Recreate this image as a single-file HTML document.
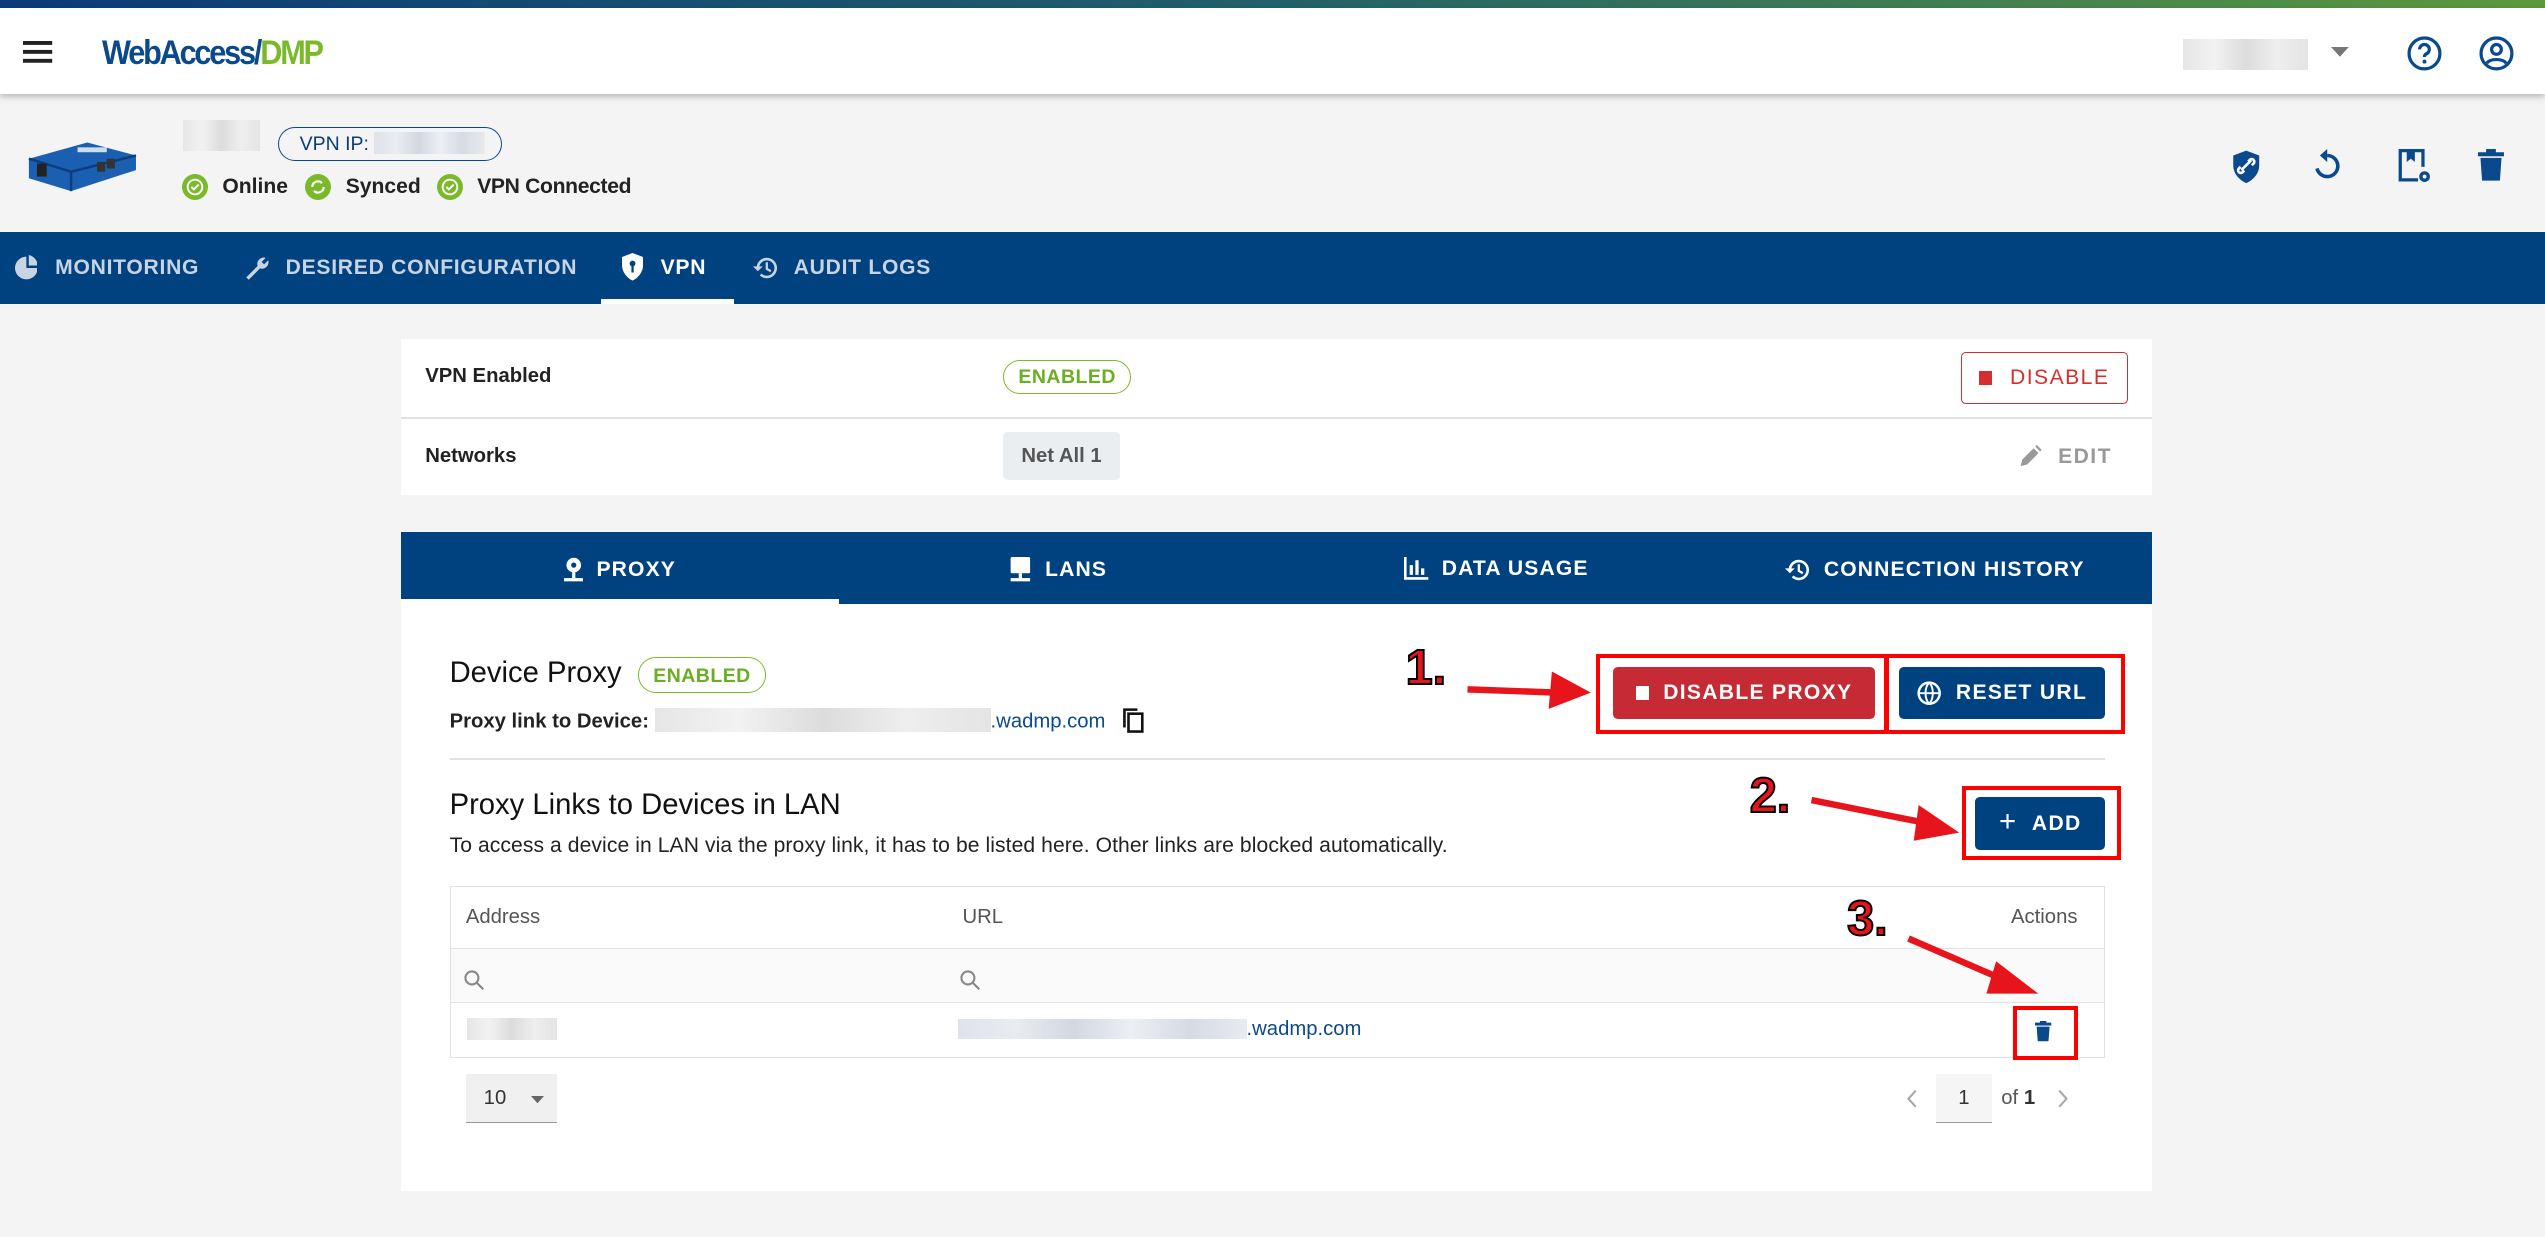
<!DOCTYPE html>
<html><head><meta charset="utf-8">
<style>
*{box-sizing:border-box;margin:0;padding:0}
html,body{width:2545px;height:1237px;overflow:hidden;background:#f4f4f4;font-family:"Liberation Sans",sans-serif}
#w{position:absolute;left:0;top:0;width:1568px;height:762px;zoom:1.6231;background:#f4f4f4}
.a{position:absolute}
.top{left:0;top:0;width:1568px;height:5px;background:linear-gradient(90deg,#0b3b78,#22606a 50%,#5b9a3c)}
.hdr{left:0;top:5px;width:1568px;height:53px;background:#fff;box-shadow:0 2px 4px rgba(0,0,0,.25)}
.blur{background:linear-gradient(90deg,#e6e6e6,#f2f2f2,#dcdcdc,#eee,#e4e4e4)}
.blurb{background:linear-gradient(90deg,#dfe3ea,#e9ecf0,#d3d8e0,#eceff3,#d6dbe3,#e8ebef)}
.b13{font-size:13px;font-weight:bold;color:#222}
.nav{left:0;top:143px;width:1568px;height:44px;background:#004280}
.nt{top:158px;font-size:13px;font-weight:bold;color:#c8d4e3;letter-spacing:.45px}
.card{background:#fff}
.chip{border:1px solid #7ab929;color:#6aae22;border-radius:11px;font-size:12px;font-weight:bold;text-align:center;letter-spacing:.3px}
.btn{border-radius:3px;color:#fff;font-size:13px;font-weight:bold;letter-spacing:.8px;display:flex;align-items:center;justify-content:center;gap:9px}
.rb{border:3px solid #f00}
.num{font-size:30px;font-weight:bold;color:#e8141c;-webkit-text-stroke:1.2px #000}
.tt{top:343px;font-size:13px;font-weight:bold;color:#fff;letter-spacing:.7px;display:flex;align-items:center;gap:8px;justify-content:center;width:270px}
</style></head><body><div id="w">
<div class="a top"></div>
<div class="a hdr"></div>
<svg class="a" style="left:14px;top:25px" width="19" height="14"><rect y="0" width="18" height="2.4" fill="#222"/><rect y="5.5" width="18" height="2.4" fill="#222"/><rect y="11" width="18" height="2.4" fill="#222"/></svg>
<div class="a" style="left:63px;top:21px;font-size:21px;font-weight:bold;color:#0a4a8c;letter-spacing:-1.5px;transform:scaleX(.9);transform-origin:left">WebAccess/<span style="color:#7ab929">DMP</span></div>
<div class="a blur" style="left:1345px;top:24px;width:77px;height:19px"></div>
<svg class="a" style="left:1436px;top:29px" width="12" height="7"><path d="M0 0h11L5.5 6z" fill="#777"/></svg>
<svg class="a" style="left:1482px;top:21px" width="24" height="24" viewBox="0 0 24 24"><circle cx="12" cy="12" r="9.5" fill="none" stroke="#0a4a8c" stroke-width="2"/><path d="M9 9.5a3 3 0 1 1 4 2.8c-.8.4-1 .9-1 1.9" fill="none" stroke="#0a4a8c" stroke-width="2"/><circle cx="12" cy="17" r="1.2" fill="#0a4a8c"/></svg>
<svg class="a" style="left:1526px;top:21px" width="24" height="24" viewBox="0 0 24 24"><circle cx="12" cy="12" r="9.5" fill="none" stroke="#0a4a8c" stroke-width="2"/><circle cx="12" cy="9.5" r="3" fill="none" stroke="#0a4a8c" stroke-width="2"/><path d="M6 18c2-3 10-3 12 0" fill="none" stroke="#0a4a8c" stroke-width="2"/></svg>

<svg class="a" style="left:15px;top:84px" width="70" height="36" viewBox="0 0 70 36"><path d="M3 14l36-10 30 8v9l-40 13-26-8z" fill="#1a5fb0"/><path d="M3 14l26 8 40-10" fill="none" stroke="#0d3d80" stroke-width="1.5"/><path d="M29 22v12" stroke="#0d3d80" stroke-width="1.5"/><rect x="33" y="7" width="18" height="3" fill="#cfdcee"/><rect x="45" y="16" width="5" height="6" fill="#333"/><rect x="51" y="14" width="5" height="6" fill="#333"/><rect x="8" y="17" width="6" height="8" fill="#222"/></svg>
<div class="a blur" style="left:113px;top:74px;width:47px;height:19px"></div>
<div class="a" style="left:171px;top:78px;width:138px;height:21px;border:1px solid #0a4a8c;border-radius:11px;font-size:12px;color:#0a3d7a;padding:3px 0 0 13px">VPN IP: <span class="blurb" style="display:inline-block;width:68px;height:13px;vertical-align:-2px"></span></div>
<svg class="a" style="left:112px;top:107px" width="16" height="16"><circle cx="8" cy="8" r="8" fill="#7ab929"/><circle cx="8" cy="8" r="4.5" fill="none" stroke="#fff" stroke-width="1.2"/><path d="M5.8 8l1.5 1.5 3-3" fill="none" stroke="#fff" stroke-width="1.2"/></svg>
<div class="a b13" style="left:137px;top:108px">Online</div>
<svg class="a" style="left:188px;top:107px" width="16" height="16"><circle cx="8" cy="8" r="8" fill="#7ab929"/><path d="M4.5 8a3.5 3.5 0 0 1 6-2.4M11.5 8a3.5 3.5 0 0 1-6 2.4" fill="none" stroke="#fff" stroke-width="1.3"/></svg>
<div class="a b13" style="left:213px;top:108px">Synced</div>
<svg class="a" style="left:269px;top:107px" width="16" height="16"><circle cx="8" cy="8" r="8" fill="#7ab929"/><circle cx="8" cy="8" r="4.5" fill="none" stroke="#fff" stroke-width="1.2"/><path d="M5.8 8l1.5 1.5 3-3" fill="none" stroke="#fff" stroke-width="1.2"/></svg>
<div class="a b13" style="left:294px;top:108px;letter-spacing:-.2px">VPN Connected</div>

<svg class="a" style="left:1374px;top:92px" width="20" height="22" viewBox="0 0 20 22"><path d="M10 1l8 3v6c0 5-3.5 9-8 11C5.5 19 2 15 2 10V4z" fill="#0a4a8c"/><path d="M7 13l6-6M6.5 11l-1 1a1.6 1.6 0 0 0 2.3 2.3l1-1M13.5 10l1-1a1.6 1.6 0 0 0-2.3-2.3l-1 1" stroke="#fff" stroke-width="1.6" fill="none"/></svg>
<svg class="a" style="left:1424px;top:92px" width="20" height="20" viewBox="0 0 20 20"><path d="M10 4a6.5 6.5 0 1 1-6.3 8" fill="none" stroke="#0a4a8c" stroke-width="2.2" stroke-dasharray="30 2 4"/><path d="M10 0v8L5.5 4z" fill="#0a4a8c"/></svg>
<svg class="a" style="left:1477px;top:92px" width="22" height="22" viewBox="0 0 22 22"><path d="M13 19H2V1h14v10" fill="none" stroke="#0a4a8c" stroke-width="2"/><path d="M6 1v7l2.5-2L11 8V1z" fill="#0a4a8c"/><circle cx="17" cy="17" r="3.3" fill="#0a4a8c"/><circle cx="17" cy="17" r="1.2" fill="#f4f4f4"/></svg>
<svg class="a" style="left:1527px;top:92px" width="16" height="20" viewBox="0 0 16 20"><rect x="0" y="2" width="16" height="2.5" fill="#0a4a8c"/><rect x="5" y="0" width="6" height="2.5" fill="#0a4a8c"/><path d="M1.5 5.5h13l-1 14h-11z" fill="#0a4a8c"/></svg>

<div class="a nav"></div>
<svg class="a" style="left:9px;top:157px" width="14" height="16"><path d="M7 1A7 7 0 1 0 14 8H7z" fill="#c8d4e3"/><path d="M8.5 0v6.5H14A7 7 0 0 0 8.5 0z" fill="#c8d4e3"/></svg>
<div class="a nt" style="left:34px">MONITORING</div>
<svg class="a" style="left:150px;top:156px" width="17" height="17"><path d="M2 15l7-7a4 4 0 0 1 5-5l-2.5 2.5 1.5 1.5 2.5-2.5a4 4 0 0 1-5 5l-7 7z" fill="#c8d4e3"/></svg>
<div class="a nt" style="left:176px">DESIRED CONFIGURATION</div>
<svg class="a" style="left:383px;top:156px" width="13" height="17"><path d="M6.5 0L13 2.5v5c0 4-3 8-6.5 9.5C3 15.5 0 11.5 0 7.5v-5z" fill="#fff"/><circle cx="6.5" cy="6.5" r="1.8" fill="#004280"/><rect x="5.8" y="7" width="1.4" height="5" fill="#004280"/></svg>
<div class="a nt" style="left:407px;color:#fff">VPN</div>
<div class="a" style="left:370px;top:184px;width:82px;height:3px;background:#fff"></div>
<svg class="a" style="left:464px;top:157px" width="16" height="16"><path d="M3 8a5.5 5.5 0 1 1 1.7 4" fill="none" stroke="#c8d4e3" stroke-width="1.6"/><path d="M0 7h6L3 10z" fill="#c8d4e3"/><path d="M8.5 4.5V8.5l2.5 1.5" fill="none" stroke="#c8d4e3" stroke-width="1.4"/></svg>
<div class="a nt" style="left:489px">AUDIT LOGS</div>

<div class="a card" style="left:247px;top:209px;width:1079px;height:96px"></div>
<div class="a" style="left:247px;top:257px;width:1079px;height:1px;background:#e2e2e2"></div>
<div class="a b13" style="left:262px;top:225px;font-size:12.5px">VPN Enabled</div>
<div class="a chip" style="left:618px;top:222px;width:79px;height:21px;padding-top:3px">ENABLED</div>
<div class="a" style="left:1208px;top:217px;width:103px;height:32px;border:1px solid #d32f2f;border-radius:3px;color:#d32f2f;font-size:13px;letter-spacing:.9px;display:flex;align-items:center;justify-content:center;gap:11px"><span style="width:8px;height:9px;background:#d32f2f"></span>DISABLE</div>
<div class="a b13" style="left:262px;top:274px;font-size:12.5px">Networks</div>
<div class="a" style="left:618px;top:266px;width:72px;height:30px;background:#ebeef1;border-radius:3px;font-size:12.5px;color:#555;font-weight:bold;text-align:center;padding-top:8px">Net All 1</div>
<svg class="a" style="left:1244px;top:274px" width="14" height="14"><path d="M1 13l1-4 7-7 3 3-7 7zM10 1l1-1 3 3-1 1z" fill="#999"/></svg>
<div class="a" style="left:1268px;top:274px;font-size:13px;color:#999;font-weight:bold;letter-spacing:.9px">EDIT</div>

<div class="a" style="left:247px;top:328px;width:1079px;height:44px;background:#004280"></div>
<div class="a" style="left:247px;top:369px;width:270px;height:3px;background:#fff"></div>
<div class="a tt" style="left:247px"><svg width="12" height="16"><circle cx="6" cy="5" r="4.5" fill="#fff"/><circle cx="6" cy="5" r="1.6" fill="#004280"/><rect x="5" y="9" width="2" height="4" fill="#fff"/><rect x="0" y="13" width="12" height="2" fill="#fff"/></svg>PROXY</div>
<div class="a tt" style="left:517px"><svg width="14" height="16"><rect x="1" y="0" width="12" height="10" rx="1" fill="#fff"/><rect x="6" y="10" width="2" height="3" fill="#fff"/><rect x="1" y="13" width="12" height="2" fill="#fff"/></svg>LANS</div>
<div class="a tt" style="left:787px"><svg width="15" height="14"><path d="M0 0h1.6v12.4H15V14H0z" fill="#fff"/><rect x="3.5" y="5" width="2" height="6" fill="#fff"/><rect x="7" y="2" width="2" height="9" fill="#fff"/><rect x="10.5" y="7" width="2" height="4" fill="#fff"/></svg>DATA USAGE</div>
<div class="a tt" style="left:1057px"><svg width="16" height="16"><path d="M3 8a5.5 5.5 0 1 1 1.7 4" fill="none" stroke="#fff" stroke-width="1.6"/><path d="M0 7h6L3 10z" fill="#fff"/><path d="M8.5 4.5V8.5l2.5 1.5" fill="none" stroke="#fff" stroke-width="1.4"/></svg>CONNECTION HISTORY</div>

<div class="a card" style="left:247px;top:372px;width:1079px;height:362px"></div>
<div class="a" style="left:277px;top:405px;font-size:18px;color:#111">Device Proxy</div>
<div class="a chip" style="left:393px;top:405px;width:79px;height:22px;padding-top:4px">ENABLED</div>
<div class="a b13" style="left:277px;top:436px;font-size:12.5px">Proxy link to Device: <span class="blur" style="display:inline-block;width:207px;height:15px;vertical-align:-3px"></span><span style="color:#0a4a8c;font-weight:normal">.wadmp.com</span></div>
<svg class="a" style="left:691px;top:436px" width="14" height="16"><rect x="4" y="3.5" width="8.5" height="11" fill="none" stroke="#111" stroke-width="1.6"/><path d="M1.5 12V1h8" fill="none" stroke="#111" stroke-width="1.6"/></svg>
<div class="a btn" style="left:994px;top:411px;width:161px;height:32px;background:#c62a35"><span style="width:8px;height:9px;background:#fff"></span>DISABLE PROXY</div>
<div class="a btn" style="left:1170px;top:411px;width:127px;height:32px;background:#004280"><svg width="15" height="15"><circle cx="7.5" cy="7.5" r="6.5" fill="none" stroke="#fff" stroke-width="1.5"/><path d="M1 7.5h13M7.5 1c-3 3-3 10 0 13M7.5 1c3 3 3 10 0 13" fill="none" stroke="#fff" stroke-width="1.2"/></svg>RESET URL</div>
<div class="a rb" style="left:983px;top:403px;width:181px;height:49px"></div>
<div class="a rb" style="left:1161px;top:403px;width:148px;height:49px"></div>
<div class="a num" style="left:866px;top:394px">1.</div>
<svg class="a" style="left:900px;top:410px" width="85" height="30"><path d="M4 15l55 2" stroke="#e8141c" stroke-width="4"/><path d="M56 4l24 13-26 10z" fill="#e8141c"/></svg>

<div class="a" style="left:277px;top:467px;width:1020px;height:1px;background:#e2e2e2"></div>
<div class="a" style="left:277px;top:486px;font-size:18px;color:#111">Proxy Links to Devices in LAN</div>
<div class="a" style="left:277px;top:514px;font-size:13px;color:#222;letter-spacing:.05px">To access a device in LAN via the proxy link, it has to be listed here. Other links are blocked automatically.</div>
<div class="a btn" style="left:1217px;top:491px;width:80px;height:33px;background:#004280"><span style="font-size:18px;font-weight:normal;margin-top:-2px">+</span>ADD</div>
<div class="a rb" style="left:1209px;top:484px;width:98px;height:46px"></div>
<div class="a num" style="left:1078px;top:473px">2.</div>
<svg class="a" style="left:1112px;top:488px" width="100" height="34"><path d="M4 5l70 14" stroke="#e8141c" stroke-width="4"/><path d="M70 8l25 17-28 5z" fill="#e8141c"/></svg>

<div class="a" style="left:277px;top:546px;width:1020px;height:106px;border:1px solid #e2e2e2"></div>
<div class="a" style="left:278px;top:584px;width:1018px;height:34px;background:#fafafa;border-top:1px solid #e2e2e2;border-bottom:1px solid #e2e2e2"></div>
<div class="a" style="left:287px;top:558px;font-size:12.5px;color:#555">Address</div>
<div class="a" style="left:593px;top:558px;font-size:12.5px;color:#555">URL</div>
<div class="a" style="left:1239px;top:558px;font-size:12.5px;color:#555">Actions</div>
<svg class="a" style="left:285px;top:597px" width="14" height="14"><circle cx="5.5" cy="5.5" r="4" fill="none" stroke="#888" stroke-width="1.3"/><path d="M8.5 8.5l4 4" stroke="#888" stroke-width="1.3"/></svg>
<svg class="a" style="left:591px;top:597px" width="14" height="14"><circle cx="5.5" cy="5.5" r="4" fill="none" stroke="#888" stroke-width="1.3"/><path d="M8.5 8.5l4 4" stroke="#888" stroke-width="1.3"/></svg>
<div class="a blur" style="left:288px;top:627px;width:55px;height:14px"></div>
<div class="a blurb" style="left:590px;top:628px;width:178px;height:12px"></div>
<div class="a" style="left:768px;top:627px;font-size:12.5px;color:#0a4a8c">.wadmp.com</div>
<svg class="a" style="left:1254px;top:629px" width="10" height="13"><rect x="0" y="1" width="10" height="1.8" fill="#0a4a8c"/><rect x="3" y="0" width="4" height="1.5" fill="#0a4a8c"/><path d="M1 3.5h8l-.7 9H1.7z" fill="#0a4a8c"/></svg>
<div class="a rb" style="left:1240px;top:620px;width:40px;height:33px"></div>
<div class="a num" style="left:1138px;top:549px">3.</div>
<svg class="a" style="left:1172px;top:574px" width="90" height="44"><path d="M4 4l60 26" stroke="#e8141c" stroke-width="4"/><path d="M58 18l26 20-32 0z" fill="#e8141c"/></svg>

<div class="a" style="left:287px;top:662px;width:56px;height:30px;background:#f0f0f0;border-bottom:1px solid #999;font-size:12.5px;color:#333;padding:8px 0 0 11px">10</div>
<svg class="a" style="left:327px;top:675px" width="9" height="5"><path d="M0 0h8L4 4.5z" fill="#666"/></svg>
<svg class="a" style="left:1174px;top:671px" width="8" height="12"><path d="M6 1L1.5 6 6 11" fill="none" stroke="#aaa" stroke-width="1.3"/></svg>
<div class="a" style="left:1193px;top:662px;width:34px;height:30px;background:#f5f5f5;border-bottom:1px solid #999;font-size:12.5px;color:#333;text-align:center;padding-top:8px">1</div>
<div class="a" style="left:1233px;top:670px;font-size:12.5px;color:#555">of <b style="color:#333">1</b></div>
<svg class="a" style="left:1267px;top:671px" width="8" height="12"><path d="M2 1l4.5 5L2 11" fill="none" stroke="#aaa" stroke-width="1.3"/></svg>
</div></body></html>
